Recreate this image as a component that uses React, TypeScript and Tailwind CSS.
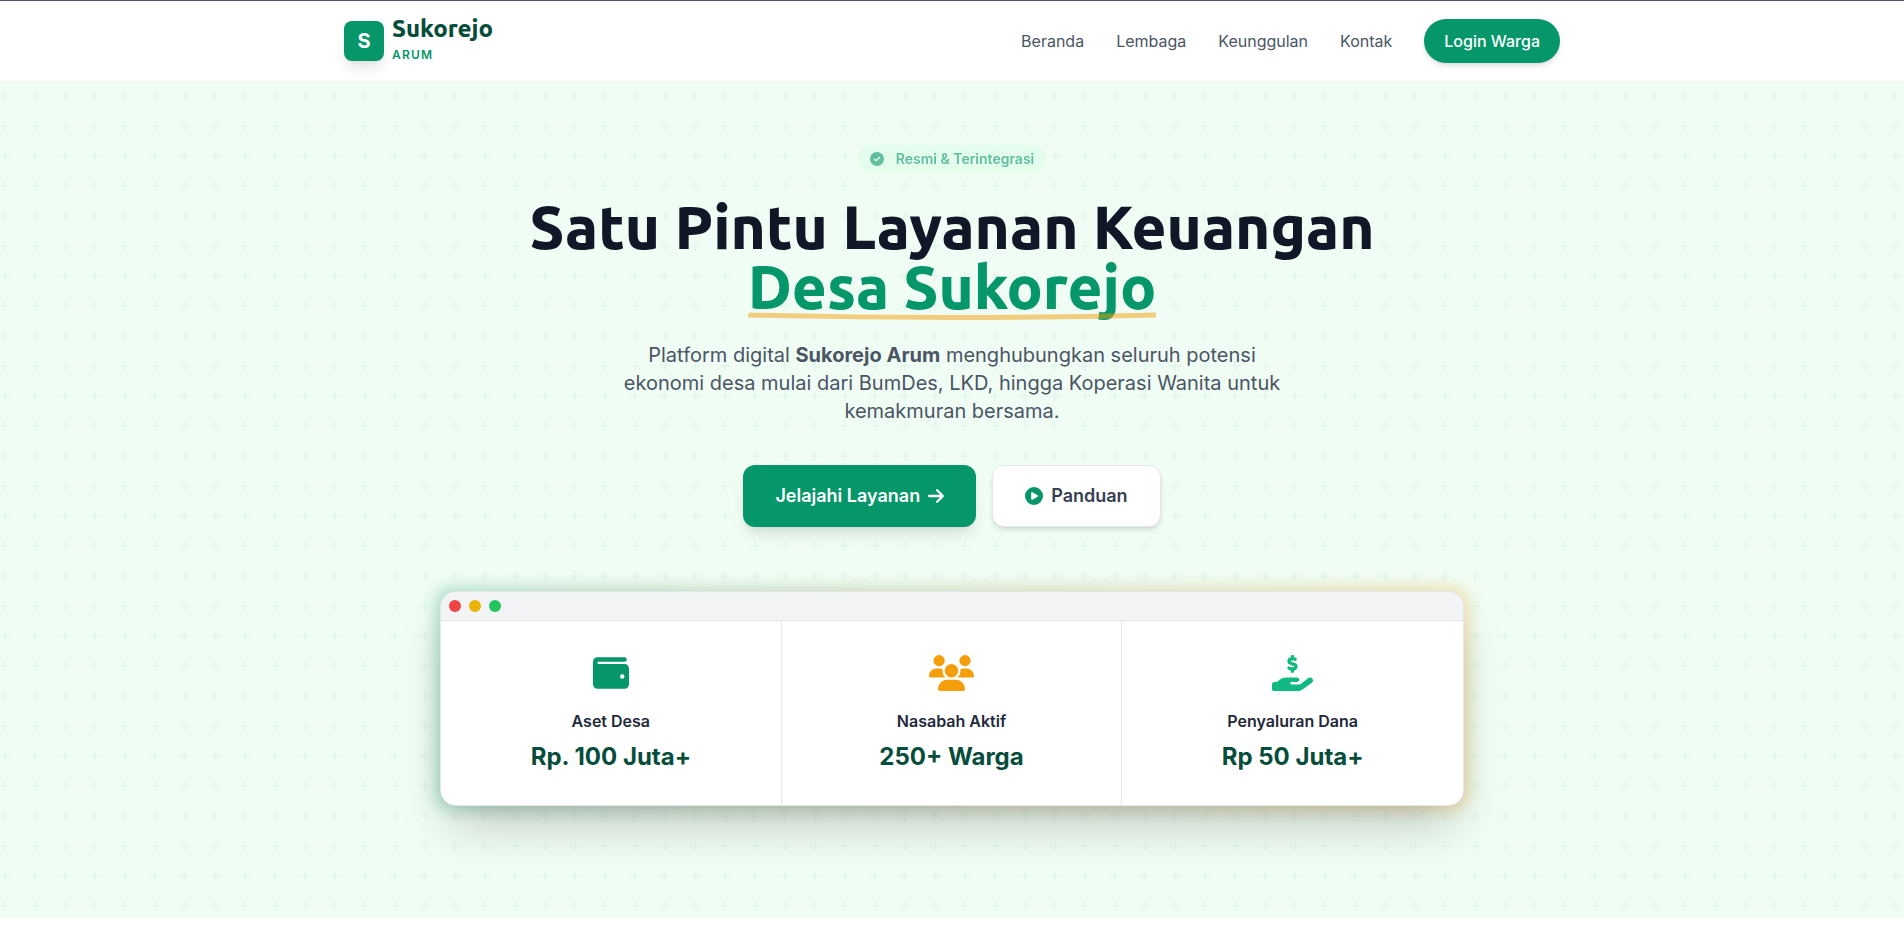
import { FaArrowRight, FaCircleCheck, FaCirclePlay, FaHandHoldingDollar, FaUsers, FaWallet } from 'react-icons/fa6'

const links = [
  { label: 'Beranda', href: '#beranda' },
  { label: 'Lembaga', href: '#lembaga' },
  { label: 'Keunggulan', href: '#keunggulan' },
  { label: 'Kontak', href: '#kontak' },
]

const stats = [
  { label: 'Aset Desa', value: 'Rp. 100 Juta+', icon: FaWallet, style: 'h-9 w-9 text-[#059669]' },
  { label: 'Nasabah Aktif', value: '250+ Warga', icon: FaUsers, style: 'h-9 w-[45px] text-[#f59e0b]' },
  { label: 'Penyaluran Dana', value: 'Rp 50 Juta+', icon: FaHandHoldingDollar, style: 'h-9 w-[41px] text-[#10b981]' },
]

function Navbar() {
  return (
    <header className="sticky top-0 z-20 border-b border-gray-100 bg-white/95">
      <div className="mx-auto flex h-20 max-w-7xl items-center justify-between px-8">
        <a href="#beranda" className="flex items-center gap-2">
          <span className="flex size-10 items-center justify-center rounded-lg bg-[#059669] text-xl font-bold text-white shadow-lg">
            S
          </span>
          <span className="flex flex-col pt-1">
            <span className="font-['Ubuntu','Noto_Sans',sans-serif] text-2xl leading-6 font-extrabold text-[#064e3b]">
              Sukorejo
            </span>
            <span className="text-xs leading-7 font-semibold tracking-widest text-[#059669]">ARUM</span>
          </span>
        </a>
        <nav className="flex items-center gap-8 text-gray-600">
          {links.map((link) => (
            <a key={link.href} href={link.href} className="hover:text-[#059669]">
              {link.label}
            </a>
          ))}
          <a
            href="#login"
            className="rounded-full bg-[#059669] px-5 py-2.5 font-medium text-white shadow-md hover:bg-[#064e3b]"
          >
            Login Warga
          </a>
        </nav>
      </div>
    </header>
  )
}

function PlusPattern() {
  return (
    <svg className="absolute inset-0 -z-10 h-full w-full" aria-hidden="true">
      <defs>
        <pattern id="plus" width="30" height="30" patternUnits="userSpaceOnUse">
          <path d="M6 4V0H4v4H0v2h4v4h2V6h4V4H6z" fill="#059669" fillOpacity="0.05" />
        </pattern>
      </defs>
      <rect width="100%" height="100%" fill="url(#plus)" />
    </svg>
  )
}

function StatsWindow() {
  return (
    <div className="relative mx-auto mt-16 max-w-5xl text-left">
      <div className="absolute -inset-1 rounded-2xl bg-gradient-to-r from-[#059669] to-[#f59e0b] opacity-30 blur-sm" />
      <div className="relative overflow-hidden rounded-2xl border border-gray-200 bg-white shadow-2xl">
        <div className="flex gap-2 border-b border-gray-200 bg-gray-100 p-2">
          <span className="size-3 rounded-full bg-[#ef4444]" />
          <span className="size-3 rounded-full bg-[#eab308]" />
          <span className="size-3 rounded-full bg-[#22c55e]" />
        </div>
        <div className="grid grid-cols-1 divide-y divide-gray-200 text-center md:grid-cols-3 md:divide-x md:divide-y-0">
          {stats.map(({ label, value, icon: Icon, style }) => (
            <div key={label} className="p-8">
              <div className="mb-4 flex h-10 items-center justify-center">
                <Icon className={style} preserveAspectRatio="xMidYMid slice" />
              </div>
              <h3 className="font-semibold text-gray-800">{label}</h3>
              <p className="mt-2 text-2xl font-bold text-[#064e3b]">{value}</p>
            </div>
          ))}
        </div>
      </div>
    </div>
  )
}

function Hero() {
  return (
    <section id="beranda" className="relative isolate -mt-[81px] bg-[#f0fdf4] px-8 pt-36 pb-28 text-center">
      <PlusPattern />
      <div className="mb-6 flex justify-center">
        <span className="flex items-center gap-3 rounded-full bg-green-100 px-3 py-1 text-sm font-semibold text-[#059669] opacity-60">
          <FaCircleCheck />
          Resmi &amp; Terintegrasi
        </span>
      </div>
      <h1 className="mb-6 font-['Ubuntu','Noto_Sans',sans-serif] text-6xl leading-none font-extrabold text-gray-900">
        Satu Pintu Layanan Keuangan
        <br />
        <span className="relative inline-block text-[#059669]">
          Desa Sukorejo
          <svg
            className="absolute -bottom-1 left-0 h-3 w-full text-[#f59e0b] opacity-50"
            viewBox="0 0 100 12"
            preserveAspectRatio="none"
            aria-hidden="true"
          >
            <path d="M0 6 Q 50 11 100 6" fill="none" stroke="currentColor" strokeWidth="5" />
          </svg>
        </span>
      </h1>
      <p className="mx-auto mb-10 max-w-2xl text-xl leading-7 text-gray-600">
        Platform digital <strong className="font-bold">Sukorejo Arum</strong> menghubungkan seluruh potensi ekonomi desa
        mulai dari BumDes, LKD, hingga Koperasi Wanita untuk kemakmuran bersama.
      </p>
      <div className="flex justify-center gap-4">
        <a
          href="#lembaga"
          className="flex items-center gap-2 rounded-xl bg-[#059669] px-8 py-4 text-lg leading-[30px] font-semibold text-white shadow-lg hover:bg-[#064e3b]"
        >
          Jelajahi Layanan
          <FaArrowRight className="h-[18px] w-4" preserveAspectRatio="xMidYMid slice" />
        </a>
        <a
          href="#panduan"
          className="flex items-center gap-2 rounded-xl border border-gray-200 bg-white px-8 text-lg font-semibold text-gray-700 shadow-md hover:bg-gray-50"
        >
          <FaCirclePlay className="text-[#059669]" />
          Panduan
        </a>
      </div>
      <StatsWindow />
    </section>
  )
}

export default function App() {
  return (
    <div className="border-t border-gray-600 bg-white font-['Inter',sans-serif]">
      <Navbar />
      <Hero />
    </div>
  )
}
